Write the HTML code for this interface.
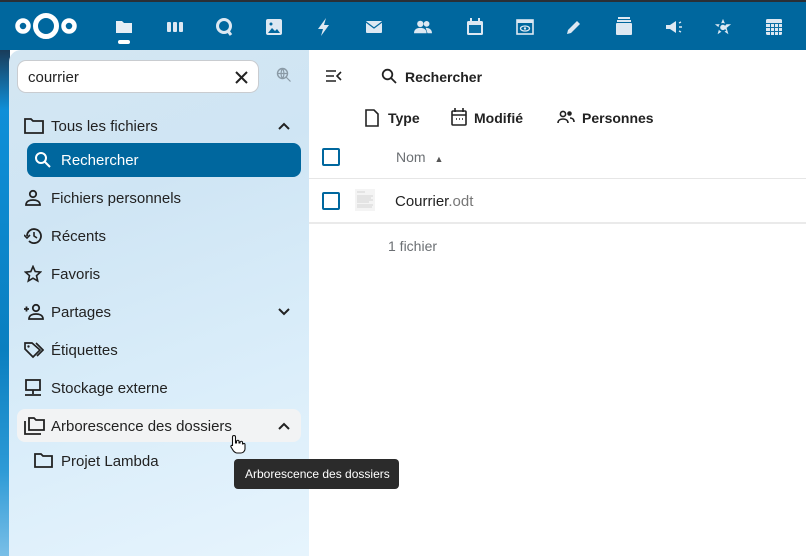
<!DOCTYPE html>
<html><head><meta charset="utf-8"><style>
*{box-sizing:border-box;margin:0;padding:0}
body{width:806px;height:556px;overflow:hidden;font-family:"Liberation Sans","DejaVu Sans",sans-serif;background:#fff;position:relative;color:#222}
.top{position:absolute;left:0;top:0;width:806px;height:50px;background:#00679e;border-top:2px solid #2a2f36}
.ic{position:absolute;top:17px;width:18px;height:16px}
.strip{position:absolute;left:0;top:50px;width:10px;height:506px;background:linear-gradient(#1a3c5a 0,#0f8fd8 60px,#0a7fc0 300px,#2d9ad6 420px,#a6d4f1 556px)}
.side{position:absolute;left:9px;top:50px;width:300px;height:506px;border-top-left-radius:12px;background:linear-gradient(160deg,#d4e6f2 0%,#cfe5f4 30%,#d8ecf9 60%,#e6f4fd 100%)}
.search{position:absolute;left:17px;top:60px;width:242px;height:33px;border:1px solid #c9ccd0;border-radius:9px;background:#fff;font-size:15px;padding:8px 10px}
.item{position:absolute;left:17px;width:284px;height:34px;font-size:15px;color:#222;line-height:36px;padding-left:34px}
.item svg{position:absolute;left:7px;top:8px}
.item svg.chev{left:auto;right:11px;top:13px}
.sel{background:#00679e;color:#fff;border-radius:8px;left:27px;width:274px;padding-left:34px}
.main-t{position:absolute;font-size:15px;font-weight:bold;color:#222}
.cb{position:absolute;width:18px;height:18px;border:2px solid #00679e;border-radius:2px}
.tip{position:absolute;left:234px;top:459px;width:165px;height:30px;background:#2b2b2b;border-radius:4px;color:#fff;font-size:12px;line-height:30px;padding-left:11px}
</style></head><body>
<div class="top">
<svg style="position:absolute;left:14px;top:9px" width="64" height="30" viewBox="0 0 64 30"><circle cx="9" cy="15" r="5.5" fill="none" stroke="#fff" stroke-width="4.5"/><circle cx="32" cy="15" r="10.5" fill="none" stroke="#fff" stroke-width="5"/><circle cx="55" cy="15" r="5.5" fill="none" stroke="#fff" stroke-width="4.5"/></svg>
<svg class="ic" style="left:115px" viewBox="0 0 18 16"><path d="M1 2h6l2 2h8v10H1z" fill="#e6eef5"/></svg>
<div style="position:absolute;left:118px;top:38px;width:12px;height:4px;border-radius:2px;background:#fff"></div>
<svg class="ic" style="left:166px" viewBox="0 0 18 16"><rect x="1" y="3" width="4" height="10" rx="1" fill="#dde8f2"/><rect x="7" y="3" width="4" height="10" rx="1" fill="#dde8f2"/><rect x="13" y="3" width="4" height="10" rx="1" fill="#dde8f2"/></svg>
<svg class="ic" style="left:215px;top:15px;height:20px" viewBox="0 0 18 20"><circle cx="9" cy="9" r="6.5" fill="none" stroke="#dde8f2" stroke-width="3"/><path d="M13 14l3 4" stroke="#dde8f2" stroke-width="3"/></svg>
<svg class="ic" style="left:265px;height:18px;top:16px" viewBox="0 0 18 18"><rect x="1" y="1" width="16" height="16" rx="2" fill="#dde8f2"/><path d="M3 15l4-5 3 3 2-2 3 4z" fill="#00679e"/><circle cx="6" cy="6" r="1.5" fill="#00679e"/></svg>
<svg class="ic" style="left:315px;height:20px;top:15px" viewBox="0 0 18 20"><path d="M11 1L3 12h5l-2 7 8-11H9z" fill="#dde8f2"/></svg>
<svg class="ic" style="left:365px" viewBox="0 0 18 16"><rect x="1" y="2" width="16" height="12" rx="1" fill="#dde8f2"/><path d="M1 3l8 6 8-6" fill="none" stroke="#00679e" stroke-width="1.2"/></svg>
<svg class="ic" style="left:414px" viewBox="0 0 20 16"><circle cx="7" cy="4.5" r="3.5" fill="#dde8f2"/><circle cx="14" cy="4.5" r="3.2" fill="#dde8f2"/><path d="M0 15c0-5 4-6 7-6s7 1 7 6z M13 9c3 0 7 1 7 6h-5z" fill="#dde8f2"/></svg>
<svg class="ic" style="left:466px;height:18px;top:16px" viewBox="0 0 18 18"><rect x="1" y="3" width="16" height="14" rx="1.5" fill="#dde8f2"/><rect x="3" y="7" width="12" height="8" fill="#0a6fa5"/><rect x="4" y="0" width="2" height="4" fill="#dde8f2"/><rect x="12" y="0" width="2" height="4" fill="#dde8f2"/></svg>
<svg class="ic" style="left:516px" viewBox="0 0 18 16"><rect x="1" y="1" width="16" height="14" fill="none" stroke="#dde8f2" stroke-width="1.6"/><rect x="1" y="1" width="16" height="3" fill="#dde8f2"/><ellipse cx="9" cy="9.5" rx="4.5" ry="2.5" fill="none" stroke="#dde8f2" stroke-width="1.3"/><circle cx="9" cy="9.5" r="1.2" fill="#dde8f2"/></svg>
<svg class="ic" style="left:565px" viewBox="0 0 18 16"><path d="M2 15l1-4 9-9 3 3-9 9z" fill="#dde8f2"/></svg>
<svg class="ic" style="left:615px;height:20px;top:14px" viewBox="0 0 18 20"><rect x="3" y="1" width="12" height="2" fill="#dde8f2"/><rect x="2" y="4" width="14" height="2" fill="#dde8f2"/><rect x="1" y="7" width="16" height="12" rx="1" fill="#dde8f2"/></svg>
<svg class="ic" style="left:665px" viewBox="0 0 18 16"><path d="M1 6h4l6-4v12l-6-4H1z" fill="#dde8f2"/><path d="M14 4l2-1M14 8h3M14 12l2 1" stroke="#dde8f2" stroke-width="1.4"/></svg>
<svg class="ic" style="left:714px;height:20px;top:15px" viewBox="0 0 20 20"><path d="M10 1l2.5 6H19l-5 4 2 7-6-4-6 4 2-7-5-4h6.5z" fill="#dde8f2"/><path d="M13 8a4 4 0 1 0 0 5" fill="none" stroke="#00679e" stroke-width="2"/></svg>
<svg class="ic" style="left:765px;height:18px;top:16px" viewBox="0 0 18 18"><rect x="1" y="1" width="16" height="16" rx="1.5" fill="#dde8f2"/><path d="M1 5.5h16M1 9.5h16M1 13.5h16M5.5 5v12M9.5 5v12M13.5 5v12" stroke="#0a6fa5" stroke-width="1"/></svg>
</div>
<div class="strip"></div>
<div class="side"></div>
<div class="search">courrier<svg style="position:absolute;right:10px;top:10px" width="13" height="13" viewBox="0 0 13 13"><path d="M1 1l11 11M12 1L1 12" stroke="#222" stroke-width="2"/></svg></div>
<svg style="position:absolute;left:276px;top:67px" width="16" height="16" viewBox="0 0 16 16"><circle cx="6.5" cy="6.5" r="5" fill="none" stroke="#8a9aa6" stroke-width="1.4"/><path d="M1.5 6.5h10M6.5 1.5c-2 3-2 7 0 10M6.5 1.5c2 3 2 7 0 10M10 10l4.5 4.5" stroke="#8a9aa6" stroke-width="1.2" fill="none"/></svg>

<div class="item" style="top:109px"><svg width="20" height="18" viewBox="0 0 20 18"><path d="M1 2h6l2 2h10v12H1z" fill="none" stroke="#222" stroke-width="1.8"/></svg>Tous les fichiers<svg class="chev" width="12" height="8" viewBox="0 0 12 8"><path d="M1 7l5-5 5 5" fill="none" stroke="#222" stroke-width="2"/></svg></div>
<div class="item sel" style="top:143px"><svg width="18" height="18" viewBox="0 0 18 18"><circle cx="7" cy="7" r="5" fill="none" stroke="#fff" stroke-width="2"/><path d="M11 11l5 5" stroke="#fff" stroke-width="2"/></svg>Rechercher</div>
<div class="item" style="top:181px"><svg width="18" height="18" viewBox="0 0 18 18"><circle cx="9" cy="5" r="3.2" fill="none" stroke="#222" stroke-width="1.8"/><path d="M2 16c0-4 4-5 7-5s7 1 7 5z" fill="none" stroke="#222" stroke-width="1.8"/></svg>Fichiers personnels</div>
<div class="item" style="top:219px"><svg width="18" height="18" viewBox="0 0 18 18"><path d="M3 9a7 7 0 1 1 2 5" fill="none" stroke="#222" stroke-width="1.8"/><path d="M0 8l3 3 3-3" fill="none" stroke="#222" stroke-width="1.6"/><path d="M10 5v4l3 2" fill="none" stroke="#222" stroke-width="1.6"/></svg>Récents</div>
<div class="item" style="top:257px"><svg width="18" height="18" viewBox="0 0 18 18"><path d="M9 1.5l2.2 5 5.3.5-4 3.6 1.2 5.3L9 13.2 4.3 16l1.2-5.3-4-3.6 5.3-.5z" fill="none" stroke="#222" stroke-width="1.6"/></svg>Favoris</div>
<div class="item" style="top:295px"><svg width="20" height="18" viewBox="0 0 20 18"><circle cx="12" cy="5" r="3.2" fill="none" stroke="#222" stroke-width="1.8"/><path d="M5 16c0-4 4-5 7-5s7 1 7 5z M0 6h5M2.5 3.5v5" fill="none" stroke="#222" stroke-width="1.8"/></svg>Partages<svg class="chev" width="12" height="8" viewBox="0 0 12 8"><path d="M1 1l5 5 5-5" fill="none" stroke="#222" stroke-width="2"/></svg></div>
<div class="item" style="top:333px"><svg width="20" height="18" viewBox="0 0 20 18"><path d="M1 2v6l8 8 7-7-8-7z M12 2l7 7-6 6" fill="none" stroke="#222" stroke-width="1.7"/><circle cx="4.5" cy="5.5" r="1.2" fill="#222"/></svg>Étiquettes</div>
<div class="item" style="top:371px"><svg width="18" height="18" viewBox="0 0 18 18"><rect x="2" y="1" width="14" height="10" fill="none" stroke="#222" stroke-width="1.8"/><path d="M9 11v4M1 16h16" stroke="#222" stroke-width="1.8"/></svg>Stockage externe</div>
<div class="item" style="top:409px;background:#f2f3f4;border-radius:8px;height:33px"><svg width="22" height="18" viewBox="0 0 22 18"><path d="M1 4v13h16" fill="none" stroke="#222" stroke-width="1.8"/><path d="M5 1h5l2 2h8v10H5z" fill="none" stroke="#222" stroke-width="1.8"/></svg>Arborescence des dossiers<svg class="chev" width="12" height="8" viewBox="0 0 12 8"><path d="M1 7l5-5 5 5" fill="none" stroke="#222" stroke-width="2"/></svg></div>
<div class="item" style="top:444px;left:27px;padding-left:34px"><svg width="20" height="18" viewBox="0 0 20 18"><path d="M1 2h6l2 2h9v11H1z" fill="none" stroke="#222" stroke-width="1.8"/></svg>Projet Lambda</div>
<svg style="position:absolute;left:230px;top:434px" width="16" height="20" viewBox="0 0 16 20"><path d="M4 1.5c1 0 1.5.5 1.5 1.5v6h1V7c1-1 2 -1 2.5 0v2h1V8c1-1 2-1 2.5 0v2h.5c1-1 2-.5 2 .5V15c0 2-2 4-4 4H7c-1.5 0-2.5-1-3.5-2L1 13c-.5-1 .5-2 1.5-1.5L2.5 12V3C2.5 2 3 1.5 4 1.5z" fill="#fff" stroke="#111" stroke-width="1.1"/></svg>
<div class="tip">Arborescence des dossiers</div>

<svg style="position:absolute;left:326px;top:70px" width="16" height="12" viewBox="0 0 16 12"><path d="M0 1h10M0 6h8M0 11h10M15 2l-4 4 4 4" fill="none" stroke="#222" stroke-width="1.6"/></svg>
<svg style="position:absolute;left:381px;top:68px" width="16" height="16" viewBox="0 0 16 16"><circle cx="6.5" cy="6.5" r="4.8" fill="none" stroke="#222" stroke-width="1.8"/><path d="M10 10l5 5" stroke="#222" stroke-width="1.8"/></svg>
<div class="main-t" style="left:405px;top:69px;font-size:14px">Rechercher</div>
<svg style="position:absolute;left:365px;top:109px" width="14" height="18" viewBox="0 0 14 18"><path d="M1 1h8l4 4v12H1z" fill="none" stroke="#222" stroke-width="1.6"/></svg>
<div class="main-t" style="left:388px;top:110px;font-size:14px">Type</div>
<svg style="position:absolute;left:451px;top:108px" width="16" height="18" viewBox="0 0 16 18"><rect x="1" y="3" width="14" height="14" rx="1" fill="none" stroke="#222" stroke-width="1.6"/><path d="M1 7h14M4 0v4M12 0v4" stroke="#222" stroke-width="1.6"/><path d="M5 11h1M8 11h1M11 11h1" stroke="#222" stroke-width="1.4"/></svg>
<div class="main-t" style="left:474px;top:110px;font-size:14px">Modifié</div>
<svg style="position:absolute;left:557px;top:110px" width="18" height="14" viewBox="0 0 18 14"><circle cx="6" cy="4" r="2.6" fill="none" stroke="#222" stroke-width="1.6"/><circle cx="12.5" cy="3.5" r="2.3" fill="#222"/><path d="M1 13c0-3 2.5-4 5-4s5 1 5 4M13 8c2 0 4 1 4 4" fill="none" stroke="#222" stroke-width="1.6"/></svg>
<div class="main-t" style="left:582px;top:110px;font-size:14px">Personnes</div>

<div class="cb" style="left:322px;top:148px"></div>
<div style="position:absolute;left:396px;top:149px;font-size:14px;color:#6b6f73">Nom <span style="font-size:9px;margin-left:5px;color:#555">▲</span></div>
<div style="position:absolute;left:309px;top:178px;width:497px;height:1px;background:#e6e6e6"></div>
<div class="cb" style="left:322px;top:192px"></div>
<svg style="position:absolute;left:355px;top:189px" width="20" height="22" viewBox="0 0 20 22"><rect width="20" height="22" fill="#f4f4f4"/><path d="M2 3h8M2 7h16M2 9h14M2 11h16M2 13h12M2 16h16M2 18h15" stroke="#d4d4d4" stroke-width="1"/></svg>
<div style="position:absolute;left:395px;top:193px;font-size:15px;color:#222">Courrier<span style="color:#777">.odt</span></div>
<div style="position:absolute;left:309px;top:222px;width:497px;height:2px;background:#eaeaea"></div>
<div style="position:absolute;left:388px;top:238px;font-size:14px;color:#6b6f73">1 fichier</div>
</body></html>
